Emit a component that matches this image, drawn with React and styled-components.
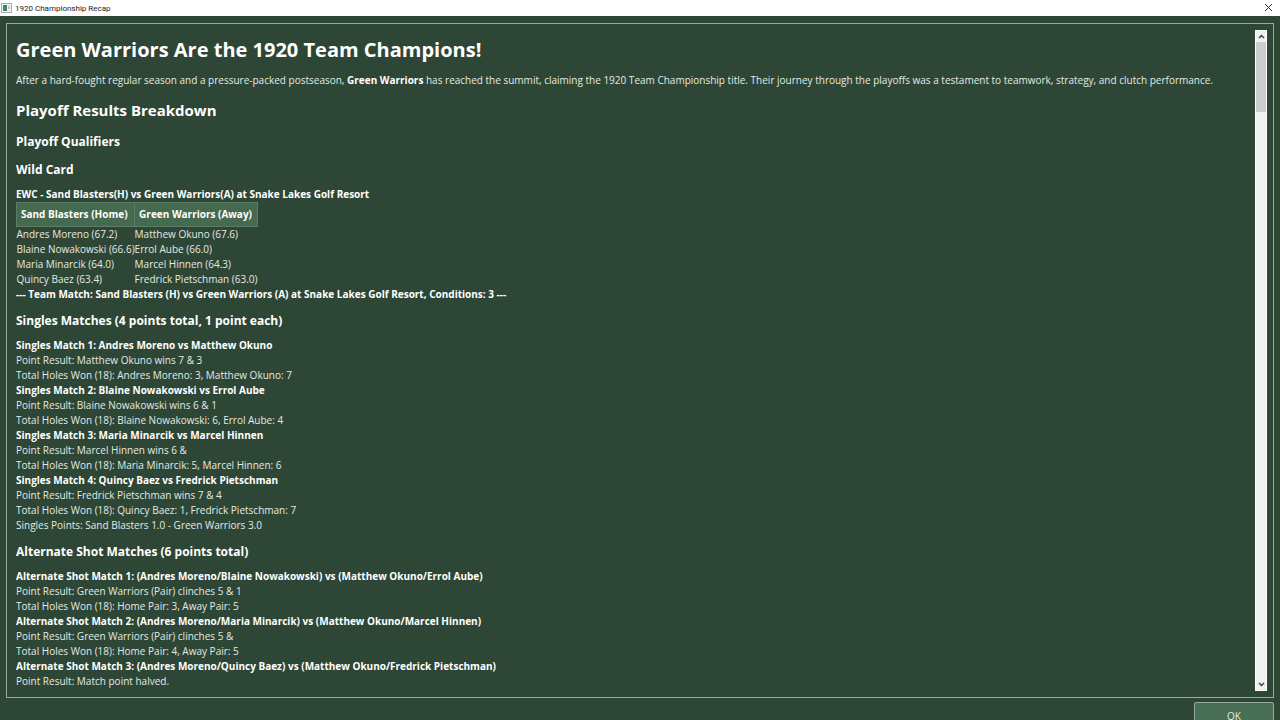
import React from 'react';
import styled, { createGlobalStyle } from 'styled-components';

const GlobalStyle = createGlobalStyle`
  * {
    box-sizing: border-box;
  }

  body {
    margin: 0;
    overflow: hidden;
    background: #2e4636;
    font-family: 'Open Sans', 'Noto Sans', sans-serif;
  }
`;

const Window = styled.div`
  display: flex;
  flex-direction: column;
  height: 100vh;
  overflow: hidden;
  color: #e4ebe4;
`;

const TitleBar = styled.header`
  display: flex;
  flex: none;
  align-items: center;
  gap: 3px;
  height: 16px;
  padding: 0 7px 0 1px;
  background: #ffffff;
  color: #222222;
  font-family: Roboto, sans-serif;
  font-size: 8px;
`;

const WindowTitle = styled.span`
  flex: 1;
`;

const CloseButton = styled.button`
  display: flex;
  padding: 0 0 2px;
  border: 0;
  background: none;
  color: #333333;
`;

const Frame = styled.main`
  display: flex;
  flex: 1;
  min-height: 0;
  margin: 7px 6px 4px;
  padding: 6px 6px 6px 9px;
  border: 1px solid #98ad9a;
`;

const Report = styled.article`
  flex: 1;
  overflow: hidden;
  font-size: 10px;
  line-height: 15px;

  h1, h2, h3, p {
    margin: 0;
    color: #ffffff;
  }

  h1 {
    padding-top: 4px;
    font-size: 20px;
    line-height: 32px;
  }

  h2 {
    padding: 11px 0 2px;
    font-size: 15px;
    line-height: 22px;
  }

  h3 {
    padding-top: 10px;
    font-size: 12px;
    line-height: 18px;
  }

  strong {
    color: #ffffff;
  }
`;

const Intro = styled.p`
  && {
    padding-top: 7px;
    color: #e4ebe4;
  }
`;

const Line = styled.div`
  white-space: nowrap;
  margin-top: ${props => (props.$first ? '8px' : '0')};
  font-weight: ${props => (props.$bold ? 'bold' : 'normal')};
  color: ${props => (props.$bold ? '#ffffff' : '#e4ebe4')};
`;

const Roster = styled.table`
  border-collapse: collapse;
  white-space: nowrap;

  th {
    height: 24px;
    padding: 0 4px;
    border: 1px solid #5d7c66;
    background: #456a50;
    color: #ffffff;
    text-align: left;
  }

  td {
    padding: 0;
  }
`;

const ScrollBar = styled.div`
  display: flex;
  flex: none;
  flex-direction: column;
  width: 12px;
  background: #f0f0f0;
  border: 1px solid #ffffff;
`;

const ScrollButton = styled.button`
  display: flex;
  align-items: center;
  justify-content: center;
  height: 11px;
  padding: 0;
  border: 0;
  background: #f0f0f0;
  color: #444444;
`;

const Track = styled.div`
  flex: 1;
`;

const Thumb = styled.div`
  height: 11%;
  background: #cdcdcd;
`;

const Footer = styled.footer`
  display: flex;
  flex: none;
  justify-content: flex-end;
  align-items: flex-start;
  height: 18px;
  padding-right: 6px;
`;

const OkButton = styled.button`
  flex: none;
  width: 80px;
  height: 28px;
  padding: 0;
  border: 1px solid #98ad9a;
  border-radius: 2px;
  background: #486f55;
  color: #e4ebe4;
  font-family: inherit;
  font-size: 10px;
`;

const players = [
  ['Andres Moreno (67.2)', 'Matthew Okuno (67.6)'],
  ['Blaine Nowakowski (66.6)', 'Errol Aube (66.0)'],
  ['Maria Minarcik (64.0)', 'Marcel Hinnen (64.3)'],
  ['Quincy Baez (63.4)', 'Fredrick Pietschman (63.0)'],
];

const singles = [
  {
    title: 'Singles Match 1: Andres Moreno vs Matthew Okuno',
    result: 'Matthew Okuno wins 7 & 3',
    holes: 'Andres Moreno: 3, Matthew Okuno: 7',
  },
  {
    title: 'Singles Match 2: Blaine Nowakowski vs Errol Aube',
    result: 'Blaine Nowakowski wins 6 & 1',
    holes: 'Blaine Nowakowski: 6, Errol Aube: 4',
  },
  {
    title: 'Singles Match 3: Maria Minarcik vs Marcel Hinnen',
    result: 'Marcel Hinnen wins 6 &',
    holes: 'Maria Minarcik: 5, Marcel Hinnen: 6',
  },
  {
    title: 'Singles Match 4: Quincy Baez vs Fredrick Pietschman',
    result: 'Fredrick Pietschman wins 7 & 4',
    holes: 'Quincy Baez: 1, Fredrick Pietschman: 7',
  },
];

const alternateShot = [
  {
    title: 'Alternate Shot Match 1: (Andres Moreno/Blaine Nowakowski) vs (Matthew Okuno/Errol Aube)',
    result: 'Green Warriors (Pair) clinches 5 & 1',
    holes: 'Home Pair: 3, Away Pair: 5',
  },
  {
    title: 'Alternate Shot Match 2: (Andres Moreno/Maria Minarcik) vs (Matthew Okuno/Marcel Hinnen)',
    result: 'Green Warriors (Pair) clinches 5 &',
    holes: 'Home Pair: 4, Away Pair: 5',
  },
  {
    title: 'Alternate Shot Match 3: (Andres Moreno/Quincy Baez) vs (Matthew Okuno/Fredrick Pietschman)',
    result: 'Match point halved.',
    holes: 'Home Pair: 4, Away Pair: 4',
  },
];

const MatchList = ({ matches }) =>
  matches.map((match, index) => (
    <React.Fragment key={match.title}>
      <Line $bold $first={index === 0}>{match.title}</Line>
      <Line>Point Result: {match.result}</Line>
      <Line>Total Holes Won (18): {match.holes}</Line>
    </React.Fragment>
  ));

const AppIcon = () => (
  <svg width="11" height="10" viewBox="0 0 11 10" aria-hidden="true">
    <rect x="0.5" y="0.5" width="10" height="9" fill="#f2f2f2" stroke="#a5abab" />
    <rect x="2" y="2" width="4" height="6" fill="#3f7f78" />
    <rect x="7" y="3" width="2" height="3" fill="#c2c8c8" />
  </svg>
);

const Arrow = ({ down }) => (
  <svg width="7" height="5" viewBox="0 0 7 5" fill="none" stroke="currentColor" strokeWidth="1.5" aria-hidden="true">
    <path d={down ? 'M1 1L3.5 3.5L6 1' : 'M1 4L3.5 1.5L6 4'} />
  </svg>
);

const App = () => (
  <Window>
    <GlobalStyle />
    <TitleBar>
      <AppIcon />
      <WindowTitle>1920 Championship Recap</WindowTitle>
      <CloseButton aria-label="Close">
        <svg width="9" height="9" viewBox="0 0 9 9" stroke="currentColor" strokeWidth="1">
          <path d="M1 1L8 8M8 1L1 8" />
        </svg>
      </CloseButton>
    </TitleBar>
    <Frame>
      <Report>
        <h1>Green Warriors Are the 1920 Team Champions!</h1>
        <Intro>
          After a hard-fought regular season and a pressure-packed postseason, <strong>Green Warriors</strong> has
          reached the summit, claiming the 1920 Team Championship title. Their journey through the playoffs was a
          testament to teamwork, strategy, and clutch performance.
        </Intro>
        <h2>Playoff Results Breakdown</h2>
        <h3>Playoff Qualifiers</h3>
        <h3>Wild Card</h3>
        <Line $bold $first>EWC - Sand Blasters(H) vs Green Warriors(A) at Snake Lakes Golf Resort</Line>
        <Roster>
          <thead>
            <tr>
              <th>Sand Blasters (Home)</th>
              <th>Green Warriors (Away)</th>
            </tr>
          </thead>
          <tbody>
            {players.map(([home, away]) => (
              <tr key={home}>
                <td>{home}</td>
                <td>{away}</td>
              </tr>
            ))}
          </tbody>
        </Roster>
        <Line $bold>
          --- Team Match: Sand Blasters (H) vs Green Warriors (A) at Snake Lakes Golf Resort, Conditions: 3 ---
        </Line>
        <h3>Singles Matches (4 points total, 1 point each)</h3>
        <MatchList matches={singles} />
        <Line>Singles Points: Sand Blasters 1.0 - Green Warriors 3.0</Line>
        <h3>Alternate Shot Matches (6 points total)</h3>
        <MatchList matches={alternateShot} />
      </Report>
      <ScrollBar>
        <ScrollButton aria-label="Scroll up"><Arrow /></ScrollButton>
        <Track><Thumb /></Track>
        <ScrollButton aria-label="Scroll down"><Arrow down /></ScrollButton>
      </ScrollBar>
    </Frame>
    <Footer>
      <OkButton>OK</OkButton>
    </Footer>
  </Window>
);

export default App;
